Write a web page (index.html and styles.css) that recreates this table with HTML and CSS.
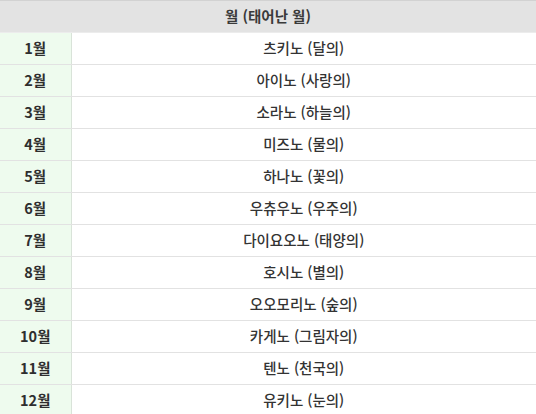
FILE: index.html
```html
<!DOCTYPE html>
<html lang="ko">
<head>
<meta charset="utf-8">
<title>월 (태어난 월)</title>
<link rel="stylesheet" href="styles.css">
</head>
<body>
<table class="months">
  <colgroup>
    <col class="col-month">
    <col class="col-name">
  </colgroup>
  <thead>
    <tr><th class="head" colspan="2">월 (태어난 월)</th></tr>
  </thead>
  <tbody>
    <tr><td class="m">1월</td><td class="n">츠키노 (달의)</td></tr>
    <tr><td class="m">2월</td><td class="n">아이노 (사랑의)</td></tr>
    <tr><td class="m">3월</td><td class="n">소라노 (하늘의)</td></tr>
    <tr><td class="m">4월</td><td class="n">미즈노 (물의)</td></tr>
    <tr><td class="m">5월</td><td class="n">하나노 (꽃의)</td></tr>
    <tr><td class="m">6월</td><td class="n">우츄우노 (우주의)</td></tr>
    <tr><td class="m">7월</td><td class="n">다이요오노 (태양의)</td></tr>
    <tr><td class="m">8월</td><td class="n">호시노 (별의)</td></tr>
    <tr><td class="m">9월</td><td class="n">오오모리노 (숲의)</td></tr>
    <tr><td class="m">10월</td><td class="n">카게노 (그림자의)</td></tr>
    <tr><td class="m">11월</td><td class="n">텐노 (천국의)</td></tr>
    <tr><td class="m">12월</td><td class="n">유키노 (눈의)</td></tr>
  </tbody>
</table>
</body>
</html>
```
FILE: styles.css
```css
html, body {
  margin: 0;
  padding: 0;
  background: #ffffff;
}
body {
  font-family: "Noto Sans CJK KR", "Noto Sans", sans-serif;
  color: #333333;
  font-size: 14.5px;
}
.months {
  width: 536px;
  border-collapse: collapse;
  table-layout: fixed;
}
.col-month {
  width: 71px;
}
.months th,
.months td {
  padding: 0;
  height: 31px;
  border-bottom: 1px solid #e2e2e2;
  text-align: center;
  vertical-align: middle;
  line-height: 1;
}
.head {
  background: #e3e3e3;
  border-top: 1px solid #d2d2d2;
  font-weight: 700;
  color: #3a3a3a;
}
.months th.head {
  height: 31px;
  border-bottom: 1px solid #ececec;
}
.m {
  background: #eefbee;
  border-right: 1px solid #d9e3d9;
  font-weight: 700;
  color: #2e2e2e;
}
.n {
  font-weight: 500;
  color: #333333;
}
```
